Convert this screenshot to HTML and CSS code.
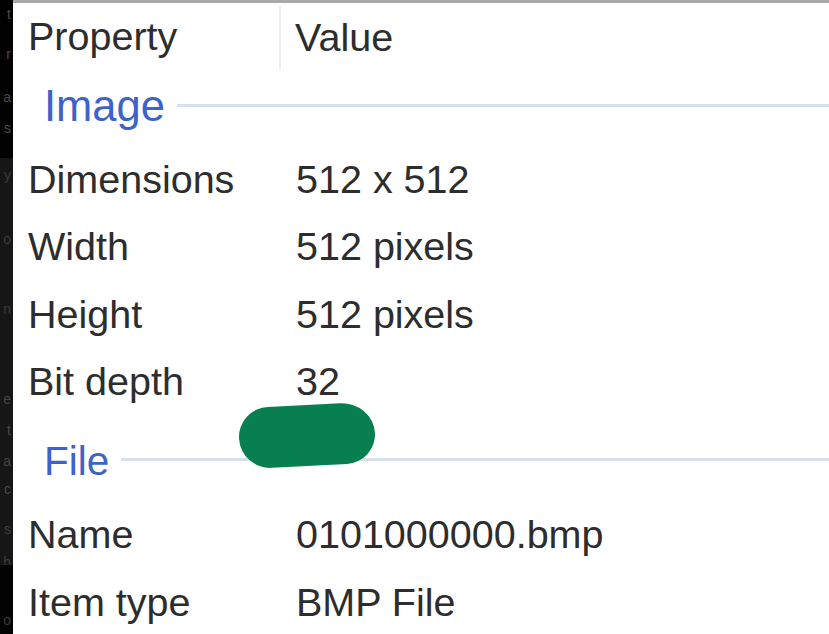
FILE: index.html
```html
<!DOCTYPE html>
<html lang="en">
<head>
<meta charset="utf-8">
<title>Properties – Details</title>
<link rel="stylesheet" href="styles.css">
</head>
<body>
<div class="screen">
  <aside class="behind">
    <div class="behind-top">
      <span class="frag f1">t</span>
      <span class="frag f2">r</span>
      <span class="frag f3">a</span>
      <span class="frag f4">s</span>
    </div>
    <div class="behind-mid">
      <span class="frag f5">y</span>
      <span class="frag f6">o</span>
      <span class="frag f7">n</span>
      <span class="frag f8">e</span>
      <span class="frag f9">t</span>
      <span class="frag f10">a</span>
      <span class="frag f11">c</span>
      <span class="frag f12">s</span>
      <span class="frag f13">h</span>
    </div>
    <div class="behind-bottom">
      <span class="frag f14">o</span>
    </div>
  </aside>

  <main class="details">
    <div class="head-row">
      <div class="col-prop">Property</div>
      <div class="col-value">Value</div>
    </div>

    <div class="group group-image">
      <span class="group-title title-image">Image</span>
      <span class="group-rule"></span>
    </div>
    <div class="row"><span class="prop">Dimensions</span><span class="val">512 x 512</span></div>
    <div class="row"><span class="prop">Width</span><span class="val">512 pixels</span></div>
    <div class="row"><span class="prop">Height</span><span class="val">512 pixels</span></div>
    <div class="row"><span class="prop">Bit depth</span><span class="val">32</span></div>

    <div class="group group-file">
      <span class="group-title">File</span>
      <span class="group-rule"></span>
      <span class="redaction"></span>
    </div>
    <div class="row"><span class="prop">Name</span><span class="val">0101000000.bmp</span></div>
    <div class="row"><span class="prop">Item type</span><span class="val">BMP File</span></div>
  </main>
</div>
</body>
</html>
```

FILE: styles.css
```css
* {
  box-sizing: border-box;
}

html,
body {
  margin: 0;
  height: 100%;
  background: #ffffff;
  overflow: hidden;
}

.screen {
  display: flex;
  width: 829px;
  height: 634px;
  font-family: "Liberation Sans", Arial, sans-serif;
}

/* dark window strip peeking in at the left edge */
.behind {
  flex: 0 0 13px;
  display: flex;
  flex-direction: column;
  background: #000;
  overflow: hidden;
}

.behind-top {
  height: 158px;
  background: #020202;
  position: relative;
}

.behind-mid {
  height: 407px;
  background: #161616;
  position: relative;
}

.behind-bottom {
  flex: 1;
  background: #030303;
  position: relative;
}

.frag {
  position: absolute;
  right: 2px;
  font-size: 14px;
  line-height: 1;
  color: #4a4a4a;
  white-space: nowrap;
}

.f1 { top: 7px; }
.f2 { top: 47px; }
.f3 { top: 90px; }
.f4 { top: 121px; }
.f5 { top: 10px; color: #3a3a3a; }
.f6 { top: 74px; color: #3a3a3a; }
.f7 { top: 144px; color: #3a3a3a; }
.f8 { top: 234px; color: #444; }
.f9 { top: 265px; }
.f10 { top: 296px; color: #444; }
.f11 { top: 324px; }
.f12 { top: 364px; color: #3e3e3e; }
.f13 { top: 397px; color: #3e3e3e; }
.f14 { top: 48px; color: #3a3a3a; }

/* details list */
.details {
  flex: 1;
  display: flex;
  flex-direction: column;
  border-top: 3px solid #a9a9a9;
  color: #2d2d2d;
  font-size: 39.5px;
  line-height: 1.15;
}

.head-row {
  height: 70px;
  display: flex;
  align-items: center;
  flex: 0 0 auto;
}

.col-prop {
  width: 268px;
  padding-left: 15px;
  height: 64px;
  display: flex;
  align-items: center;
  border-right: 2px solid #ececec;
  align-self: flex-start;
  margin-top: 2px;
}

.col-value {
  padding-left: 14px;
}

.group {
  display: flex;
  align-items: center;
  padding-left: 31px;
  position: relative;
  flex: 0 0 auto;
}

.group-image {
  height: 73px;
  padding-bottom: 6px;
}

.group-file {
  height: 86px;
  padding-top: 5px;
}

.group-title {
  color: #3d63c8;
  font-size: 40.5px;
}

.title-image {
  font-size: 43.5px;
}

.group-rule {
  flex: 1;
  height: 3px;
  margin-left: 12px;
  margin-top: -2px;
  background: #d7deec;
}

.row {
  display: flex;
  align-items: center;
  height: 67.33px;
  flex: 0 0 auto;
}

.prop {
  width: 283px;
  padding-left: 15px;
}

.val {
  white-space: nowrap;
}

/* felt-pen mark drawn over the list */
.redaction {
  position: absolute;
  left: 226px;
  top: -10px;
  width: 136px;
  height: 61px;
  border-radius: 31px 34px 30px 32px / 30px 32px 30px 31px;
  background: #077f50;
  transform: rotate(-3deg);
}
```
